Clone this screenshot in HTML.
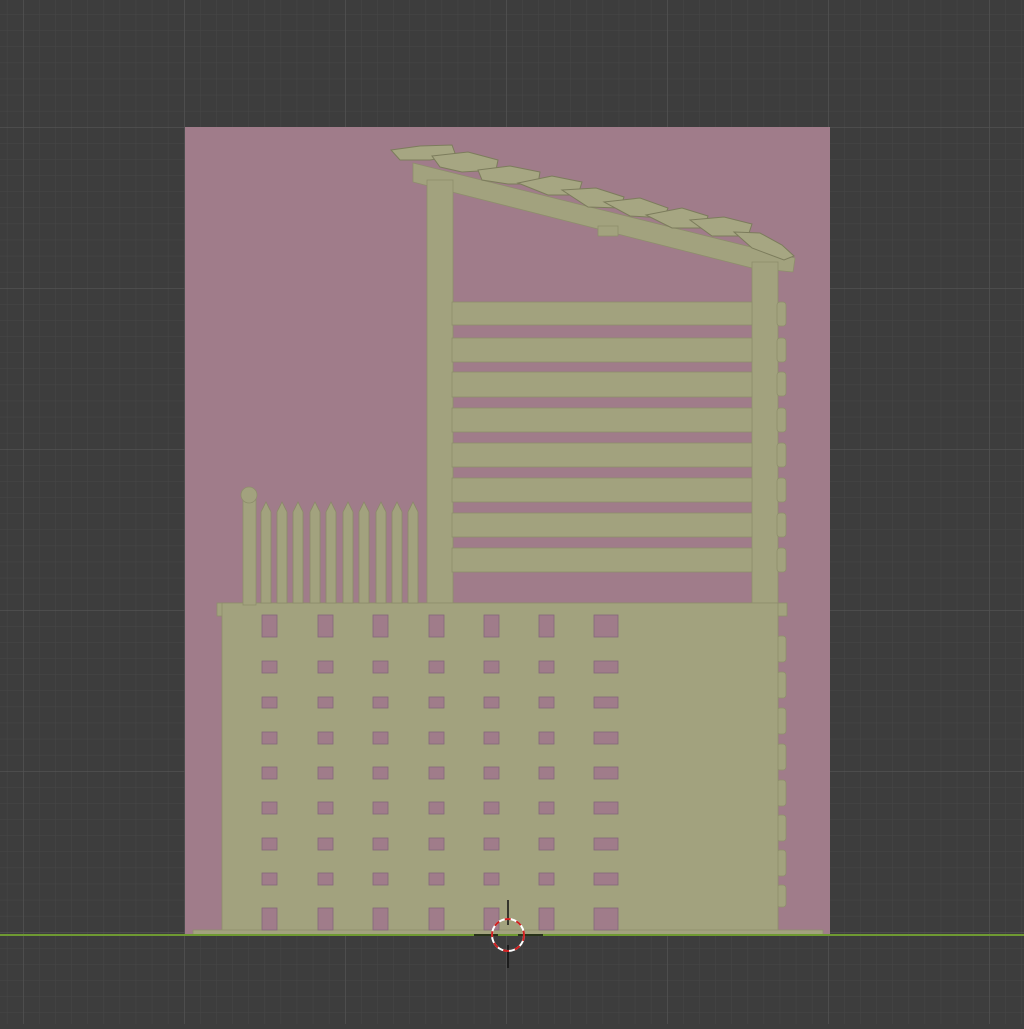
<!DOCTYPE html><html><head><style>html,body{margin:0;padding:0;background:#3d3d3d;overflow:hidden}</style></head><body>
<svg width="1024" height="1024" viewBox="0 0 1024 1024" xmlns="http://www.w3.org/2000/svg">
<defs>
<pattern id="minor" x="23" y="127" width="16.1" height="16.1" patternUnits="userSpaceOnUse"><path d="M0 0H16.1M0 0V16.1" stroke="#474747" stroke-width="1" fill="none"/></pattern>
<pattern id="major" x="23" y="127" width="161" height="161" patternUnits="userSpaceOnUse"><path d="M0 0H161M0 0V161" stroke="#525252" stroke-width="1.5" fill="none"/></pattern>
</defs>
<rect width="1024" height="1024" fill="#3d3d3d"/>
<rect width="1024" height="1024" fill="url(#minor)"/>
<rect width="1024" height="1024" fill="url(#major)"/>
<rect x="185" y="127" width="645" height="808" fill="#a07c8a"/>
<g fill="#a2a27e" stroke="#8e8e6c" stroke-width="0.8">
<!-- roof beam -->
<polygon points="413,163 795,258 793,272 752,268 452,192 413,182"/>
<rect x="598" y="226" width="20" height="10"/>
<!-- posts -->
<rect x="427" y="180" width="26" height="425"/>
<rect x="752" y="262" width="26" height="673"/>
<!-- slats -->
<rect x="452" y="302" width="300" height="23"/>
<rect x="452" y="338" width="300" height="24"/>
<rect x="452" y="372" width="300" height="25"/>
<rect x="452" y="408" width="300" height="24"/>
<rect x="452" y="443" width="300" height="24"/>
<rect x="452" y="478" width="300" height="24"/>
<rect x="452" y="513" width="300" height="24"/>
<rect x="452" y="548" width="300" height="24"/>
<!-- side bumps -->
<rect x="777" y="302" width="9" height="24" rx="3"/><rect x="777" y="338" width="9" height="24" rx="3"/><rect x="777" y="372" width="9" height="24" rx="3"/><rect x="777" y="408" width="9" height="24" rx="3"/><rect x="777" y="443" width="9" height="24" rx="3"/><rect x="777" y="478" width="9" height="24" rx="3"/><rect x="777" y="513" width="9" height="24" rx="3"/><rect x="777" y="548" width="9" height="24" rx="3"/>
<rect x="777" y="636" width="9" height="26" rx="3"/><rect x="777" y="672" width="9" height="26" rx="3"/><rect x="777" y="708" width="9" height="26" rx="3"/><rect x="777" y="744" width="9" height="26" rx="3"/><rect x="777" y="780" width="9" height="26" rx="3"/><rect x="777" y="815" width="9" height="26" rx="3"/><rect x="777" y="850" width="9" height="26" rx="3"/><rect x="777" y="885" width="9" height="22" rx="3"/>
<!-- base -->
<rect x="217" y="603" width="570" height="13"/>
<rect x="222" y="603" width="556" height="332"/>
<rect x="193" y="930" width="630" height="5"/>
<!-- fence -->
<rect x="243" y="500" width="13" height="105"/>
<circle cx="249" cy="495" r="8"/>
</g>
<g fill="#a2a27e" stroke="#8a8a68" stroke-width="0.8">
<path d="M261 603V512L266 502L271 512V603Z"/><path d="M277 603V512L282 502L287 512V603Z"/><path d="M293 603V512L298 502L303 512V603Z"/><path d="M310 603V512L315 502L320 512V603Z"/><path d="M326 603V512L331 502L336 512V603Z"/><path d="M343 603V512L348 502L353 512V603Z"/><path d="M359 603V512L364 502L369 512V603Z"/><path d="M376 603V512L381 502L386 512V603Z"/><path d="M392 603V512L397 502L402 512V603Z"/><path d="M408 603V512L413 502L418 512V603Z"/>
</g>
<!-- roof logs -->
<g fill="#a6a682" stroke="#7c7c5c" stroke-width="1">
<path d="M391 150L420 146L452 145L456 156L430 160L400 160Z"/>
<path d="M432 156L468 152L498 160L496 170L462 172L440 167Z"/>
<path d="M478 170L510 166L540 172L538 184L508 184L482 180Z"/>
<path d="M518 183L552 176L582 182L578 195L548 195Z"/>
<path d="M562 190L596 188L624 197L620 208L588 207Z"/>
<path d="M604 202L640 198L668 208L664 218L630 216Z"/>
<path d="M646 215L682 208L708 216L704 228L672 228Z"/>
<path d="M690 220L724 217L752 224L748 236L712 236Z"/>
<path d="M734 232L760 233L782 245L794 256L784 260L752 248Z"/>
</g>
<!-- windows -->
<g fill="#a07c8a" stroke="#84687a" stroke-width="0.8">
<g id="col">
<rect x="262" y="615" width="15" height="22"/><rect x="262" y="661" width="15" height="12"/><rect x="262" y="697" width="15" height="11"/><rect x="262" y="732" width="15" height="12"/><rect x="262" y="767" width="15" height="12"/><rect x="262" y="802" width="15" height="12"/><rect x="262" y="838" width="15" height="12"/><rect x="262" y="873" width="15" height="12"/><rect x="262" y="908" width="15" height="22"/>
</g>
<use href="#col" x="56"/><use href="#col" x="111"/><use href="#col" x="167"/><use href="#col" x="222"/><use href="#col" x="277"/>
<rect x="594" y="615" width="24" height="22"/><rect x="594" y="661" width="24" height="12"/><rect x="594" y="697" width="24" height="11"/><rect x="594" y="732" width="24" height="12"/><rect x="594" y="767" width="24" height="12"/><rect x="594" y="802" width="24" height="12"/><rect x="594" y="838" width="24" height="12"/><rect x="594" y="873" width="24" height="12"/><rect x="594" y="908" width="24" height="22"/>
</g>
<!-- axis line -->
<rect x="0" y="934" width="1024" height="2" fill="#6f9a32"/>
<!-- 3D cursor -->
<g>
<line x1="508" y1="900" x2="508" y2="925" stroke="#111" stroke-width="1.5"/>
<line x1="508" y1="945" x2="508" y2="968" stroke="#111" stroke-width="1.5"/>
<line x1="474" y1="935" x2="498" y2="935" stroke="#111" stroke-width="1.5"/>
<line x1="518" y1="935" x2="543" y2="935" stroke="#111" stroke-width="1.5"/>
<circle cx="508" cy="935" r="16" fill="none" stroke="#fff" stroke-width="2"/>
<circle cx="508" cy="935" r="16" fill="none" stroke="#d02020" stroke-width="2" stroke-dasharray="6 6"/>
</g>
</svg>
</body></html>
